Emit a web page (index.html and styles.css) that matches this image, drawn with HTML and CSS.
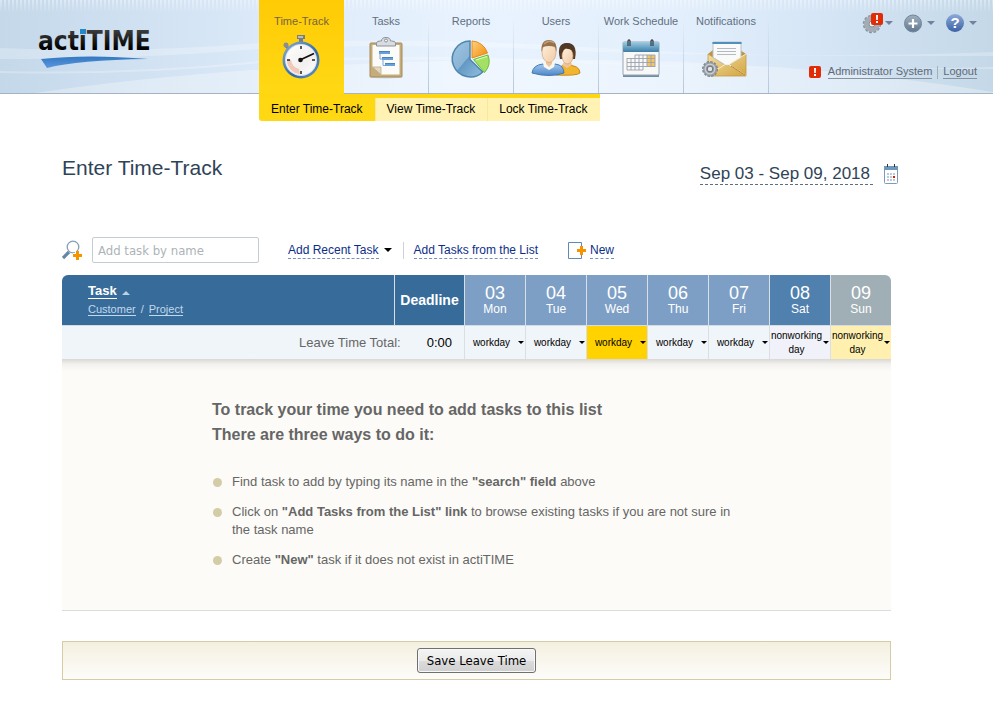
FILE: index.html
```html
<!DOCTYPE html>
<html lang="en">
<head>
<meta charset="utf-8">
<title>actiTIME - Enter Time-Track</title>
<link rel="stylesheet" href="styles.css">
</head>
<body>
<header class="top">
  <svg class="top-waves" viewBox="0 0 993 93" preserveAspectRatio="none" aria-hidden="true">
    <path d="M0 48Q130 54 260 43Q420 36 600 48T993 52V56Q700 56 600 52Q420 42 260 49Q130 60 0 59Z" fill="#fff" opacity=".25"/>
    <path d="M0 71Q130 74 260 61Q420 52 600 62T993 67V69Q700 68 600 64Q420 56 260 63Q130 76 0 73Z" fill="#fff" opacity=".25"/>
    <path d="M35 93Q230 64 500 60T993 92V93Z" fill="#fff" opacity=".3"/>
  </svg>
  <a class="logo" href="#" aria-label="actiTIME">
    <svg width="118" height="46" viewBox="0 0 118 46">
      <defs>
        <linearGradient id="ink" x1="0" y1="0" x2="0" y2="1"><stop offset="0" stop-color="#4a4a4a"/><stop offset=".75" stop-color="#000"/></linearGradient>
        <linearGradient id="swoosh" x1="0" y1="0" x2="0" y2="1"><stop offset="0" stop-color="#3478bf"/><stop offset="1" stop-color="#5a97e0"/></linearGradient>
      </defs>
      <text x="0" y="25" class="logo-text" fill="url(#ink)">actiTIME</text>
      <rect x="42" y="4" width="6" height="5" fill="#2388c9"/>
      <path d="M3 34Q50 29 110 34Q40 35 9 43Z" fill="url(#swoosh)"/>
    </svg>
  </a>
  <nav class="tabs" aria-label="Main">
    <a class="tab tab-active" href="#"><span>Time-Track</span>
      <svg width="46" height="46" viewBox="0 0 46 46">
        <defs><linearGradient id="rim" x1="0" y1="0" x2="1" y2="1"><stop offset="0" stop-color="#8fb0d0"/><stop offset=".6" stop-color="#2f68a8"/><stop offset="1" stop-color="#6d9acb"/></linearGradient>
        <linearGradient id="face" x1="0" y1="0" x2="1" y2="1"><stop offset="0" stop-color="#fff"/><stop offset=".6" stop-color="#f1f0ee"/><stop offset="1" stop-color="#fff"/></linearGradient></defs>
        <path d="M18 0h8v4h-2v5h-4V4h-2z" fill="#777d84"/><path d="M19 1h5v2h-5z" fill="#b9bec4"/>
        <path d="M6 10l5 5" stroke="#777" stroke-width="3"/><circle cx="7" cy="10" r="2.5" fill="#888d92"/>
        <circle cx="22" cy="25" r="18.5" fill="url(#rim)"/><circle cx="22" cy="25" r="16" fill="#d9e2ea"/><circle cx="22" cy="25" r="15" fill="url(#face)"/>
        <path d="M8 25A14 14 0 0 0 21 39L20 34Q13 32 12 25Z" fill="#f3b8a4" opacity=".75"/>
        <path d="M22 11v3M22 36v3M8 25h3M33 25h3" stroke="#222" stroke-width="1.5"/>
        <path d="M21 25L35 18.500" stroke="#111" stroke-width="1.8"/><circle cx="21.500" cy="25" r="2.300" fill="#111"/>
      </svg></a>
    <a class="tab" href="#"><span>Tasks</span>
      <svg width="46" height="46" viewBox="0 0 46 46">
        <ellipse cx="23" cy="42" rx="17" ry="1.500" fill="#9badbf" opacity=".4"/>
        <rect x="7" y="8" width="32" height="34" rx="1" fill="#c6ac78" stroke="#a58b58"/>
        <path d="M9.500 10h27v29.500H18L9.500 32z" fill="#fbfbfa"/><path d="M9.500 32h8.500v7.500z" fill="#e2d9c4" stroke="#b6a680" stroke-width=".7"/>
        <path d="M13.500 11V8q0-2 4-2h1q0-3.500 4.500-3.500T27.500 6h1q4 0 4 2v3z" fill="#d9dce0" stroke="#8c939b"/><circle cx="23" cy="5.500" r="1.500" fill="#f5f5f5" stroke="#8c939b"/>
        <path d="M17 17.500v6.500h3M20 24v6.500h3" fill="none" stroke="#7fa8d5"/>
        <path d="M16 16h11v3H16zM19 22h11v3H19zM22 28h10v3H22z" fill="#67a0da"/><path d="M16 16h11v1H16zM19 22h11v1H19zM22 28h10v1H22z" fill="#4a82bd"/>
      </svg></a>
    <a class="tab" href="#"><span>Reports</span>
      <svg width="46" height="46" viewBox="0 0 46 46">
        <defs><linearGradient id="pie" x1="0" y1="0" x2="1" y2="1"><stop offset="0" stop-color="#9dc4e2"/><stop offset=".48" stop-color="#8bb4d5"/><stop offset=".5" stop-color="#6299c4"/><stop offset="1" stop-color="#94bfdf"/></linearGradient>
        <linearGradient id="orange" x1="0" y1="0" x2="1" y2="1"><stop offset="0" stop-color="#ffd280"/><stop offset="1" stop-color="#ef8a08"/></linearGradient></defs>
        <path d="M22 6A18 18 0 1 0 34.700 37L22 24.500Z" fill="url(#pie)" stroke="#4f86ae" stroke-width="1.500"/>
        <path d="M24 6A17 17 0 0 1 39.500 18L24 23Z" fill="url(#orange)" stroke="#e88b17"/>
        <path d="M25.500 24.500L40 20A17 17 0 0 1 36.500 37.500Z" fill="#a4e065" stroke="#68bd35"/>
        <path d="M28 25l11-3.500" stroke="#e2ffc4"/>
      </svg></a>
    <a class="tab" href="#"><span>Users</span>
      <svg width="52" height="46" viewBox="0 0 52 46">
        <defs><linearGradient id="skin" x1="0" y1="0" x2="1" y2="1"><stop offset="0" stop-color="#fff1df"/><stop offset="1" stop-color="#f0c9a0"/></linearGradient>
        <linearGradient id="shirt" x1="0" y1="0" x2="0" y2="1"><stop offset="0" stop-color="#a2c8ee"/><stop offset="1" stop-color="#4c86c6"/></linearGradient></defs>
        <path d="M30 24Q26 8 37 8t8 16z" fill="#553b26"/>
        <path d="M26 40Q28 30 36 30Q50 30 50 38Q47 41 26 40Z" fill="#f2b530" stroke="#cb8a17"/>
        <path d="M34 27h7l1 3-5 3-5-3z" fill="#edc59c"/><ellipse cx="37.500" cy="21" rx="5.500" ry="8" fill="url(#skin)" stroke="#c99a6a" stroke-width=".6"/>
        <path d="M32 18Q34 12 38 14Q42 14 43.500 18Q44 8 37 8T32 18Z" fill="#4f3825"/>
        <path d="M2 38Q3 30 13 29h12q9 1 9 9Q20 43 2 38Z" fill="url(#shirt)" stroke="#4579b2"/>
        <path d="M13 28h12l-1 4-5 3-5-3z" fill="#f8f7f2"/><path d="M16 25h6v4l-3 3-3-3z" fill="#edc59c"/>
        <ellipse cx="19" cy="17.500" rx="7" ry="10" fill="url(#skin)" stroke="#c99a6a" stroke-width=".6"/>
        <path d="M11.500 17Q10.500 5 19 5t7.500 12l-1.500-5q-6-2-12 0z" fill="#95704b"/><path d="M14 9q5-5 10-1" stroke="#c29e75" stroke-width="1.500" fill="none"/>
      </svg></a>
    <a class="tab" href="#"><span>Work Schedule</span>
      <svg width="46" height="46" viewBox="0 0 46 46">
        <defs><linearGradient id="calhead" x1="0" y1="0" x2="0" y2="1"><stop offset="0" stop-color="#9fcce2"/><stop offset="1" stop-color="#3b7da8"/></linearGradient></defs>
        <rect x="5" y="38" width="36" height="4" fill="#6e8da6"/><rect x="5" y="7" width="36" height="33" rx="1" fill="#f8f8f6" stroke="#98a7b4"/>
        <rect x="5" y="7" width="36" height="10" rx="1" fill="url(#calhead)"/>
        <path d="M10 11V6q1-2 2 0v5M33 11V6q1-2 2 0v5" stroke="#404d59" stroke-width="1.400" fill="none"/>
        <path d="M29 20h8v12h-8z" fill="#f5c55f"/>
        <path d="M17 20h20M9 23.500h28M9 27.500h28M9 31.500h28M9 35h16M9 23v12M13 23v12M17 20v15M21 20v15M25 20v15M29 20v12M33 20v12M37 20v12" stroke="#9aa1b2" fill="none" stroke-width=".9"/>
      </svg></a>
    <a class="tab" href="#"><span>Notifications</span>
      <svg width="48" height="46" viewBox="0 0 48 46">
        <defs><linearGradient id="env" x1="0" y1="0" x2="1" y2="1"><stop offset="0" stop-color="#f5dea0"/><stop offset="1" stop-color="#d2a542"/></linearGradient></defs>
        <path d="M6 19l5-4h27l6 4-19 14z" fill="#bd9445"/>
        <path d="M6 19l19 12 19-12v22H6z" fill="url(#env)" stroke="#c19a46" stroke-width=".8"/>
        <path d="M11 7h28v15.500L25 31 11 22.500z" fill="#fafaf9" stroke="#b9c2cb"/><path d="M10.500 7h29v2h-29z" fill="#4e8fbe"/>
        <path d="M15 13.500h19M15 16.500h19M15 19.500h19" stroke="#b2bbc4"/>
        <path d="M7 40L23 29.500h4L43.500 40M27 29.500L44 19" stroke="#fff0c2" fill="none"/><path d="M29 31l14 9" stroke="#af853a"/>
        <circle cx="8" cy="34" r="7" fill="none" stroke="#7c838b" stroke-width="2" stroke-dasharray="2.400 1.265"/>
        <circle cx="8" cy="34" r="4.800" fill="none" stroke="#959ca4" stroke-width="4.200"/><circle cx="8" cy="34" r="4.800" fill="none" stroke="#c9ced3" stroke-width="1.400"/><circle cx="8" cy="34" r="2.800" fill="#dfe5ea" stroke="#686f77"/>
      </svg></a>
  </nav>
  <div class="account">
    <div class="tools">
      <button class="tool tool-settings" aria-label="Settings">
        <svg width="22" height="22" viewBox="0 0 22 22"><circle cx="10" cy="12" r="8.200" fill="none" stroke="#8a949e" stroke-width="2" stroke-dasharray="2.800 1.493"/><circle cx="10" cy="12" r="5.500" fill="none" stroke="#a3acb5" stroke-width="5"/><circle cx="10" cy="12" r="3" fill="#e5edf5" stroke="#858e98"/><rect x="9" y="1" width="12" height="12" rx="2" fill="#e12c05"/><path d="M14 3h2l-.2 5h-1.600zM14 9h2v2h-2z" fill="#fff"/></svg>
        <i class="caret-slate"></i></button>
      <button class="tool" aria-label="Add">
        <svg width="18" height="20" viewBox="0 0 18 20"><defs><linearGradient id="ball" x1="0" y1="0" x2="0" y2="1"><stop offset="0" stop-color="#a0afbe"/><stop offset="1" stop-color="#62788f"/></linearGradient></defs><circle cx="9" cy="10.500" r="8.500" fill="url(#ball)" stroke="#71869b"/><path d="M9 6v9M4.500 10.500h9" stroke="#fff" stroke-width="2.200"/></svg>
        <i class="caret-slate"></i></button>
      <button class="tool" aria-label="Help">
        <span class="help">?</span><i class="caret-slate"></i></button>
    </div>
    <div class="user"><svg width="12" height="12" viewBox="0 0 12 12"><rect width="12" height="12" rx="2" fill="#e12c05"/><path d="M5 2h2l-.2 5H5.200zM5 8h2v2H5z" fill="#fff"/></svg>
      <a href="#">Administrator System</a><span class="bar"></span><a href="#">Logout</a></div>
  </div>
</header>
<nav class="subtabs" aria-label="Time-Track">
  <a class="subtab subtab-active" href="#">Enter Time-Track</a><a class="subtab" href="#">View Time-Track</a><a class="subtab" href="#">Lock Time-Track</a>
</nav>
<main class="page">
  <div class="heading">
    <h1>Enter Time-Track</h1>
    <div class="range"><button class="range-text">Sep 03 - Sep 09, 2018</button>
      <button class="icon-button" aria-label="Open calendar"><svg width="14" height="20" viewBox="0 0 14 20"><rect x=".5" y="2.500" width="13" height="17" rx="1" fill="#fff" stroke="#7e9ab4"/><path d="M0 2h14v4H0z" fill="#6f97bb"/><path d="M3.500 0v3M10.500 0v3" stroke="#333"/><path d="M3 9h2v2H3zM6 9h2v2H6zM9 9h2v2H9zM3 12h2v2H3zM6 12h2v2H6zM3 15h2v2H3zM6 15h2v2H6zM9 15h2v2H9z" fill="#b9cbdb"/><path d="M9 12h2v2H9z" fill="#d22200"/></svg></button></div>
  </div>
  <div class="toolbar">
    <svg width="20" height="20" viewBox="0 0 20 20" aria-hidden="true"><path d="M1 18l6-6" stroke="#6487a7" stroke-width="3.200"/><circle cx="11" cy="7" r="5.800" fill="#fff" stroke="#86a0b8" stroke-width="1.300"/><path d="M15.500 11v9M11 15.500h9" stroke="#fff" stroke-width="5"/><path d="M15.500 11v9M11 15.500h9" stroke="#f69400" stroke-width="3"/></svg>
    <input class="search" type="text" placeholder="Add task by name" aria-label="Add task by name">
    <button class="recent"><span class="dashed">Add Recent Task</span><i class="caret"></i></button>
    <span class="divider"></span>
    <a class="dashed" href="#">Add Tasks from the List</a>
    <a class="new" href="#"><svg width="18" height="17" viewBox="0 0 18 17" aria-hidden="true"><path d="M13.500 4V.5H.5v16h13V13" fill="none" stroke="#5e8bb5"/><path d="M13.500 4v9M9 8.500h9" stroke="#f69400" stroke-width="3"/></svg><span class="dashed">New</span></a>
  </div>
  <table class="grid">
    <colgroup><col><col class="col-deadline"><col class="col-day"><col class="col-day"><col class="col-day"><col class="col-day"><col class="col-day"><col class="col-day"><col class="col-day"></colgroup>
    <thead><tr>
      <th class="task-head"><div><a class="sort" href="#">Task</a><i class="up"></i></div><div class="sub"><a href="#">Customer</a><span>/</span><a href="#">Project</a></div></th>
      <th class="deadline">Deadline</th>
      <th class="day"><b>03</b>Mon</th><th class="day"><b>04</b>Tue</th><th class="day"><b>05</b>Wed</th><th class="day"><b>06</b>Thu</th><th class="day"><b>07</b>Fri</th><th class="day sat"><b>08</b>Sat</th><th class="day sun"><b>09</b>Sun</th>
    </tr></thead>
    <tbody><tr>
      <td class="total" colspan="2">Leave Time Total:<span>0:00</span></td>
      <td><button class="kind"><span>workday</span><i class="caret-small"></i></button></td>
      <td><button class="kind"><span>workday</span><i class="caret-small"></i></button></td>
      <td class="today"><button class="kind"><span>workday</span><i class="caret-small"></i></button></td>
      <td><button class="kind"><span>workday</span><i class="caret-small"></i></button></td>
      <td><button class="kind"><span>workday</span><i class="caret-small"></i></button></td>
      <td class="sat-cell"><button class="kind"><span>nonworking day</span><i class="caret-small"></i></button></td>
      <td class="sun-cell"><button class="kind"><span>nonworking day</span><i class="caret-small"></i></button></td>
    </tr></tbody>
  </table>
  <section class="empty">
    <h2>To track your time you need to add tasks to this list<br>There are three ways to do it:</h2>
    <ul>
      <li>Find task to add by typing its name in the <b>"search" field</b> above</li>
      <li>Click on <b>"Add Tasks from the List" link</b> to browse existing tasks if you are not sure in the task name</li>
      <li>Create <b>"New"</b> task if it does not exist in actiTIME</li>
    </ul>
  </section>
  <div class="actions"><button class="save">Save Leave Time</button></div>
</main>
</body>
</html>
```

FILE: styles.css
```css
* { box-sizing: border-box; }
body {
  margin: 0;
  background: #fff;
  color: #666;
  font: 12px/16px "Liberation Sans", Arial, sans-serif;
}
a { color: inherit; text-decoration: none; }
button {
  padding: 0;
  border: 0;
  background: none;
  color: inherit;
  font: inherit;
  cursor: pointer;
}
svg { display: block; flex: none; }

/* Header */
.top {
  position: relative;
  display: flex;
  height: 94px;
  border-bottom: 1px solid #a3b4c5;
  background: linear-gradient(90deg, #c4d8ea, #dbe9f8 26%, #e9f3ff 48%, #e3effc 68%, #d6e6f6 82%, #c4d8e8);
}
.top::before {
  content: "";
  position: absolute;
  inset: 0 0 auto;
  height: 13px;
  background: repeating-linear-gradient(90deg, rgba(255, 255, 255, .4) 0 2px, transparent 2px 4px);
  mask-image: linear-gradient(#000, transparent);
}
.top-waves { position: absolute; inset: 0; width: 100%; height: 100%; }
.logo { position: relative; width: 259px; padding: 25px 0 0 38px; }
.logo-text { font: bold 26px "DejaVu Sans Condensed", "DejaVu Sans", sans-serif; }
.tabs { position: relative; display: flex; }
.tab {
  display: flex;
  flex-direction: column;
  align-items: center;
  gap: 6px;
  width: 85px;
  padding-top: 13px;
  border-right: 1px solid;
  border-image: linear-gradient(transparent 20%, #b4c6d8) 1;
  color: #617080;
  font-size: 11px;
  white-space: nowrap;
}
.tab-active {
  height: 94px;
  border: 0;
  background: linear-gradient(#ffcb05, #ffd814);
  color: #75643c;
}
.account {
  position: relative;
  display: flex;
  flex-direction: column;
  align-items: flex-end;
  gap: 31px;
  margin-left: auto;
  padding: 12px 16px 0 0;
}
.tools { display: flex; gap: 11px; }
.tool { display: flex; align-items: center; gap: 5px; height: 22px; }
.tool-settings { gap: 1px; }
.help {
  width: 18px;
  height: 18px;
  border-radius: 50%;
  background: linear-gradient(#8daada, #3c62a4);
  color: #fff;
  font: bold 15px/18px "Liberation Sans", sans-serif;
}
.caret-slate, .caret, .caret-small {
  border: solid transparent;
  border-top-color: #000;
  border-width: 4px 4px 0;
}
.caret-slate { border-top-color: #71819e; }
.caret-small { border-width: 3px 3px 0; }
.user { display: flex; align-items: center; color: #5f6a75; font-size: 11px; line-height: 13px; }
.user a { border-bottom: 1px solid #8693a0; }
.user svg { margin-right: 7px; }
.bar { width: 1px; height: 13px; margin: 0 5px; background: #a5afb8; }

/* Second level */
.subtabs { display: flex; margin-left: 259px; color: #000; }
.subtab {
  height: 27px;
  padding: 3px 12px 0;
  border-top: 4px solid #ffd60f;
  background: #fff2b2;
  line-height: 17px;
  box-shadow: inset 1px 0 #f7e89e;
}
.subtab-active {
  border-radius: 0 0 0 3px;
  background: #ffd814;
  box-shadow: none;
}

/* Page */
.page { padding: 33px 102px 30px 62px; }
.heading { display: flex; justify-content: space-between; align-items: flex-start; margin-right: -7px; }
h1 { margin: 0; color: #2f4357; font-size: 21px; font-weight: normal; line-height: 28px; }
.range { display: flex; align-items: center; gap: 11px; padding-top: 9px; }
.range-text {
  padding-right: 3px;
  border-bottom: 1px dashed #5c6e80;
  color: #2f4357;
  font-size: 17px;
  line-height: 21px;
}
.toolbar { display: flex; align-items: center; height: 26px; margin-top: 52px; color: #0c2e87; }
.search {
  width: 167px;
  height: 26px;
  margin: 0 29px 0 10px;
  padding: 0 5px;
  border: 1px solid #c4ccd4;
  border-radius: 2px;
  font: 13px "DejaVu Sans Condensed", Tahoma, sans-serif;
}
.search::placeholder { color: #adb3b8; }
.dashed { padding-top: 2px; border-bottom: 1px dashed #7890bd; line-height: 15px; white-space: nowrap; }
.recent { display: flex; align-items: center; gap: 5px; }
.divider { width: 1px; height: 17px; margin: 0 10px 0 11px; background: #ccd2da; }
.new { display: flex; align-items: center; gap: 4px; margin-left: 30px; }

/* Table */
.grid {
  width: 100%;
  margin-top: 12px;
  table-layout: fixed;
  border-collapse: separate;
  border-spacing: 0;
  border-radius: 6px 6px 0 0;
  overflow: hidden;
}
.col-deadline { width: 70px; }
.col-day { width: 61px; }
.grid th {
  height: 51px;
  padding: 0;
  border-bottom: 1px solid #d5dde4;
  background: #376b9a;
  color: #fff;
}
.grid th + th, .grid td + td { border-left: 1px solid #d9dfe5; }
.grid .task-head { padding-left: 26px; text-align: left; font-size: 13px; }
.task-head a { border-bottom: 1px solid currentColor; line-height: 15px; }
.up {
  display: inline-block;
  margin-left: 5px;
  border: solid transparent;
  border-width: 0 4px 4px;
  border-bottom-color: #bed1e3;
}
.sub { margin-top: 2px; color: #c2d8ec; font-size: 11px; font-weight: normal; }
.sub span { margin: 0 5px; }
.grid .deadline { font-size: 14px; }
.grid .day { background: #7e9fc5; font-size: 12px; font-weight: normal; line-height: 14px; }
.day b { display: block; font-size: 18px; font-weight: normal; line-height: 18px; }
.grid .sat { background: #5080ad; }
.grid .sun { background: #9fafb5; }
.grid td { height: 33px; padding: 0; background: #f0f5f9; }
.grid .total { padding-right: 12px; text-align: right; font-size: 13px; }
.total span { margin-left: 26px; color: #000; }
.grid .today { background: #ffd200; }
.grid .sat-cell { background: #f1f2f9; }
.grid .sun-cell { background: #fff0b0; }
.kind {
  display: flex;
  align-items: center;
  width: 100%;
  padding-right: 1px;
  color: #000;
  font-size: 10px;
  line-height: 14px;
}
.kind span { flex: 1; }

/* Empty list */
.empty {
  padding: 38px 20px 41px 150px;
  border-bottom: 1px solid #ddd;
  background: linear-gradient(#d8d7d3, #f2f1ed 5px, #fcfbf7 12px);
}
h2 { margin: 0; color: #666; font-size: 16px; line-height: 25px; }
ul {
  display: grid;
  gap: 12px;
  max-width: 530px;
  margin: 26px 0 0;
  padding: 0;
  list-style: none;
  font-size: 13px;
  line-height: 18px;
}
li { display: block; position: relative; padding-left: 20px; }
li::before {
  content: "";
  position: absolute;
  left: 1px;
  top: 5px;
  width: 9px;
  height: 9px;
  border-radius: 50%;
  background: #d3cca6;
}
.actions {
  display: flex;
  justify-content: center;
  margin-top: 30px;
  padding: 6px;
  border: 1px solid #d3cca6;
  background: linear-gradient(#f4f0e0, #fdfcf9);
}
.save {
  height: 25px;
  padding: 0 9px;
  border: 1px solid #707070;
  border-radius: 3px;
  background: linear-gradient(#f4f4f4, #ebebeb 50%, #dcdcdc 51%, #cfcfcf);
  box-shadow: inset 0 0 0 1px #f8f8f8;
  color: #000;
  font: 13px "DejaVu Sans Condensed", Tahoma, sans-serif;
}
```
